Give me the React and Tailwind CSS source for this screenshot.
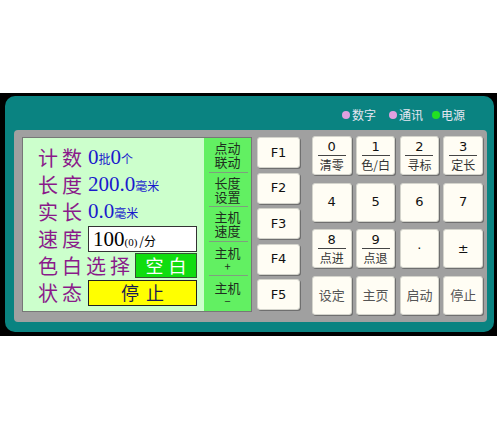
import React from "react";

const cjk = { fontFamily: '"Noto Sans CJK SC", "Noto Sans", sans-serif' };
const serif = { fontFamily: '"Liberation Serif", "Noto Sans CJK SC", serif' };
const sans = { fontFamily: '"DejaVu Sans", "Noto Sans CJK SC", sans-serif' };

function Key({ children, className = "" }) {
  return (
    <div
      className={
        "bg-[#fffdf4] rounded-[3px] border border-[#d4d4cc] shadow-[1px_1px_0_#6f6f6f] flex flex-col items-center justify-center " +
        className
      }
    >
      {children}
    </div>
  );
}

function FracKey({ top, bottom }) {
  return (
    <Key className="h-[39px]">
      <div className="text-[13px] leading-[13px] text-[#111]" style={sans}>{top}</div>
      <div className="w-[28px] h-px bg-[#444] my-[2px]" />
      <div className="text-[12px] leading-[13px] text-[#333]" style={cjk}>{bottom}</div>
    </Key>
  );
}

function PlainKey({ label, cn = false }) {
  return (
    <Key className="h-[39px]">
      <div
        className={cn ? "text-[13px] text-[#555]" : "text-[13px] text-[#111]"}
        style={cn ? cjk : sans}
      >
        {label}
      </div>
    </Key>
  );
}

function Label({ children, wide = false }) {
  return (
    <div
      className={
        "text-[20px] leading-[22px] text-[#8a1a8a] tracking-[4px] shrink-0 " +
        (wide ? "w-[97px]" : "w-[50px]")
      }
      style={cjk}
    >
      {children}
    </div>
  );
}

function Side({ lines, last = false }) {
  return (
    <div className="h-[35px] flex flex-col items-center justify-center relative">
      {lines.map((l, i) => (
        <div
          key={i}
          className={
            l === "+" || l === "−"
              ? "text-[11px] leading-[12px] text-[#1f2f1f]"
              : "text-[13px] leading-[14px] text-[#1f2f1f]"
          }
          style={cjk}
        >
          {l}
        </div>
      ))}
      {!last && (
        <div className="absolute bottom-0 left-[5px] right-[3px] h-px bg-[#7f9f7f]" />
      )}
    </div>
  );
}

export default function App() {
  return (
    <div className="w-[497px] h-[430px] bg-white pt-[93px]">
      <div className="h-[243px] bg-black pt-[3px] pl-[5px] pr-[3px] pb-[4px]">
        <div className="h-full rounded-[10px] bg-[#0a8381] pl-[9px] pr-[7px] pb-[10px] flex flex-col">
          <div className="h-[34px] flex items-center justify-end pr-[22px] pt-[4px]">
            <div className="flex items-center text-[12px] text-[#e6e6f2]" style={cjk}>
              <span className="w-[8px] h-[8px] rounded-full bg-[#e0a0e0] mr-[2px]" />
              <span>数字</span>
              <span className="w-[8px] h-[8px] rounded-full bg-[#e0a0e0] ml-[13px] mr-[2px]" />
              <span>通讯</span>
              <span className="w-[8px] h-[8px] rounded-full bg-[#22e022] ml-[9px] mr-[1px]" />
              <span>电源</span>
            </div>
          </div>
          <div className="flex-1 bg-[#a0a0a0] rounded-[4px] flex items-start pl-[8px] pt-[7px]">
            {/* display */}
            <div className="w-[230px] h-[175px] flex border border-[#777] shrink-0">
              <div className="flex-1 bg-[#ccffcc] pl-[15px] pt-[6px]">
                <div className="h-[27px] flex items-center">
                  <Label>计数</Label>
                  <div className="flex items-baseline text-[#1a1acc]">
                    <span className="text-[21px]" style={serif}>0</span>
                    <span className="text-[12px]" style={cjk}>批</span>
                    <span className="text-[21px]" style={serif}>0</span>
                    <span className="text-[12px]" style={cjk}>个</span>
                  </div>
                </div>
                <div className="h-[27px] flex items-center">
                  <Label>长度</Label>
                  <div className="flex items-baseline text-[#1a1acc]">
                    <span className="text-[21px]" style={serif}>200.0</span>
                    <span className="text-[12px]" style={cjk}>毫米</span>
                  </div>
                </div>
                <div className="h-[27px] flex items-center">
                  <Label>实长</Label>
                  <div className="flex items-baseline text-[#1a1acc]">
                    <span className="text-[21px]" style={serif}>0.0</span>
                    <span className="text-[12px]" style={cjk}>毫米</span>
                  </div>
                </div>
                <div className="h-[27px] flex items-center">
                  <Label>速度</Label>
                  <div className="w-[109px] h-[26px] bg-white border border-[#333] flex items-baseline pl-[4px] text-black">
                    <span className="text-[21px] leading-[24px]" style={serif}>100</span>
                    <span className="text-[11px]" style={serif}>(0)</span>
                    <span className="text-[12px] ml-[2px]" style={cjk}>/分</span>
                  </div>
                </div>
                <div className="h-[27px] flex items-center">
                  <Label wide>色白选择</Label>
                  <div className="w-[62px] h-[25px] bg-[#10dd10] border border-[#335533] flex items-center justify-center text-white text-[18px] tracking-[5px] pl-[5px]" style={cjk}>
                    空白
                  </div>
                </div>
                <div className="h-[27px] flex items-center">
                  <Label>状态</Label>
                  <div className="w-[109px] h-[26px] bg-[#ffff00] border border-[#222] flex items-center justify-center text-[#1a1a55] text-[18px] tracking-[7px] pl-[7px]" style={cjk}>
                    停止
                  </div>
                </div>
              </div>
              <div className="w-[47px] bg-[#62f062] flex flex-col">
                <Side lines={["点动", "联动"]} />
                <Side lines={["长度", "设置"]} />
                <Side lines={["主机", "速度"]} />
                <Side lines={["主机", "+"]} />
                <Side lines={["主机", "−"]} last />
              </div>
            </div>
            {/* F keys */}
            <div className="w-[43px] ml-[5px] flex flex-col gap-[4.5px] shrink-0">
              {["F1", "F2", "F3", "F4", "F5"].map((f) => (
                <Key key={f} className="h-[31px]">
                  <span className="text-[13px] text-[#111]" style={sans}>{f}</span>
                </Key>
              ))}
            </div>
            {/* number keys */}
            <div className="w-[171px] ml-[12px] -mt-[1px] grid grid-cols-4 gap-x-[4.3px] gap-y-[7.5px] shrink-0">
              <FracKey top="0" bottom="清零" />
              <FracKey top="1" bottom="色/白" />
              <FracKey top="2" bottom="寻标" />
              <FracKey top="3" bottom="定长" />
              <PlainKey label="4" />
              <PlainKey label="5" />
              <PlainKey label="6" />
              <PlainKey label="7" />
              <FracKey top="8" bottom="点进" />
              <FracKey top="9" bottom="点退" />
              <PlainKey label="·" />
              <PlainKey label="±" />
              <PlainKey label="设定" cn />
              <PlainKey label="主页" cn />
              <PlainKey label="启动" cn />
              <PlainKey label="停止" cn />
            </div>
          </div>
        </div>
      </div>
    </div>
  );
}
